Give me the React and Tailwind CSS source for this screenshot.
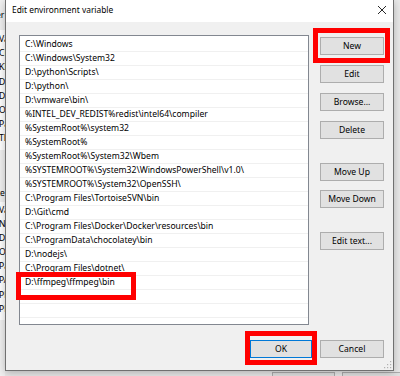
import React from "react";

const paths = [
  "C:\\Windows",
  "C:\\Windows\\System32",
  "D:\\python\\Scripts\\",
  "D:\\python\\",
  "D:\\vmware\\bin\\",
  "%INTEL_DEV_REDIST%redist\\intel64\\compiler",
  "%SystemRoot%\\system32",
  "%SystemRoot%",
  "%SystemRoot%\\System32\\Wbem",
  "%SYSTEMROOT%\\System32\\WindowsPowerShell\\v1.0\\",
  "%SYSTEMROOT%\\System32\\OpenSSH\\",
  "C:\\Program Files\\TortoiseSVN\\bin",
  "D:\\Git\\cmd",
  "C:\\Program Files\\Docker\\Docker\\resources\\bin",
  "C:\\ProgramData\\chocolatey\\bin",
  "D:\\nodejs\\",
  "C:\\Program Files\\dotnet\\",
  "D:\\ffmpeg\\ffmpeg\\bin",
  "",
  "",
  "",
];

// first letters of the window sitting behind the dialog
const behindTop = ["Var", "CHo", "KIt", "DIr", "Dri", "One", "Pat", "TEM"];
const behindBottom = ["Var", "NUM", "DIr", "OS", "Pat", "PAT", "PRO", "PRO"];

const Button = ({ label, className = "" }) => (
  <button
    className={`w-[64px] h-[18px] bg-[#e1e1e1] border border-[#adadad] text-black leading-none flex items-center justify-center ${className}`}
  >
    {label}
  </button>
);

const App = () => {
  return (
    <div
      className="relative w-[400px] h-[376px] overflow-hidden bg-[#e9e9e9] text-[8.6px] text-black"
      style={{ fontFamily: '"Noto Sans", "Open Sans", sans-serif' }}
    >
      {/* window behind the dialog */}
      <div className="absolute left-0 top-0 w-[5px] h-[376px] overflow-hidden bg-[#f0f0f0]">
        <div className="h-[10px] mt-[10px] -ml-[4px] leading-[10px]">er</div>
        <div className="mt-[10px] bg-white pt-[2px] pb-[4px]">
          {behindTop.map((t, i) => (
            <div key={i} className="h-[14.2px] -ml-[1px] leading-[14px] whitespace-nowrap">
              {t}
            </div>
          ))}
        </div>
        <div className="mt-[38px] -ml-[3px] leading-[10px]">te</div>
        <div className="mt-[4px] bg-white pt-[1px] pb-[4px]">
          {behindBottom.map((t, i) => (
            <div key={i} className="h-[14.2px] -ml-[1px] leading-[14px] whitespace-nowrap">
              {t}
            </div>
          ))}
        </div>
      </div>
      <div className="absolute left-[272px] top-[372px] w-[63px] h-[10px] bg-[#e1e1e1] border border-[#adadad]" />
      <div className="absolute left-[342px] top-[372px] w-[63px] h-[10px] bg-[#e1e1e1] border border-[#adadad]" />

      {/* dialog */}
      <div className="absolute left-[5px] top-0 w-[389px] h-[371px] flex flex-col border-x border-b border-[#707070] shadow-[0_2px_8px_rgba(0,0,0,0.25)]">
        <div className="h-[22px] bg-white flex items-center justify-between pl-[6px] pr-[6px]">
          <span className="text-[8.4px] -mt-[1px]">Edit environment variable</span>
          <svg width="10" height="10" viewBox="0 0 10 10" className="-mt-[2px]">
            <path d="M1 1 L9 9 M9 1 L1 9" stroke="#111" strokeWidth="0.9" fill="none" />
          </svg>
        </div>

        <div className="relative flex-1 bg-[#f0f0f0] pl-[13px] pr-[9px] pt-[13px]">
          <div className="flex">
            <div className="w-[290px] h-[290px] bg-white border border-[#828790] pt-[2px] overflow-hidden">
              {paths.map((p, i) => (
                <div
                  key={i}
                  className="h-[14px] border-b border-[#f0f0f0] pl-[5px] flex items-center whitespace-nowrap"
                >
                  {p}
                </div>
              ))}
            </div>
            <div className="ml-[11px] flex flex-col">
              <Button label="New" className="mt-[2px]" />
              <Button label="Edit" className="mt-[10px]" />
              <Button label="Browse..." className="mt-[10px]" />
              <Button label="Delete" className="mt-[10px]" />
              <Button label="Move Up" className="mt-[24px]" />
              <Button label="Move Down" className="mt-[9px]" />
              <Button label="Edit text..." className="mt-[24px]" />
            </div>
          </div>

          <div className="flex justify-end gap-[8px] mt-[15px]">
            <button className="w-[62px] h-[18px] bg-[#e1e1e1] border border-[#0078d7] flex items-center justify-center leading-none">
              OK
            </button>
            <Button label="Cancel" />
          </div>

          <svg width="8" height="8" viewBox="0 0 8 8" className="absolute right-[1px] bottom-[1px]">
            <rect x="6" y="0" width="1.2" height="1.2" fill="#b0b0b0" />
            <rect x="3" y="3" width="1.2" height="1.2" fill="#b0b0b0" />
            <rect x="6" y="3" width="1.2" height="1.2" fill="#b0b0b0" />
            <rect x="0" y="6" width="1.2" height="1.2" fill="#b0b0b0" />
            <rect x="3" y="6" width="1.2" height="1.2" fill="#b0b0b0" />
            <rect x="6" y="6" width="1.2" height="1.2" fill="#b0b0b0" />
          </svg>
        </div>
      </div>

      {/* red annotation boxes */}
      <div className="absolute left-[313px] top-[28px] w-[77px] h-[35px] border-[5px] border-[#ff0000]" />
      <div className="absolute left-[16px] top-[272px] w-[120px] h-[28px] border-[5px] border-[#ff0000]" />
      <div className="absolute left-[245px] top-[331px] w-[72px] h-[34px] border-[5px] border-[#ff0000]" />
    </div>
  );
};

export default App;
